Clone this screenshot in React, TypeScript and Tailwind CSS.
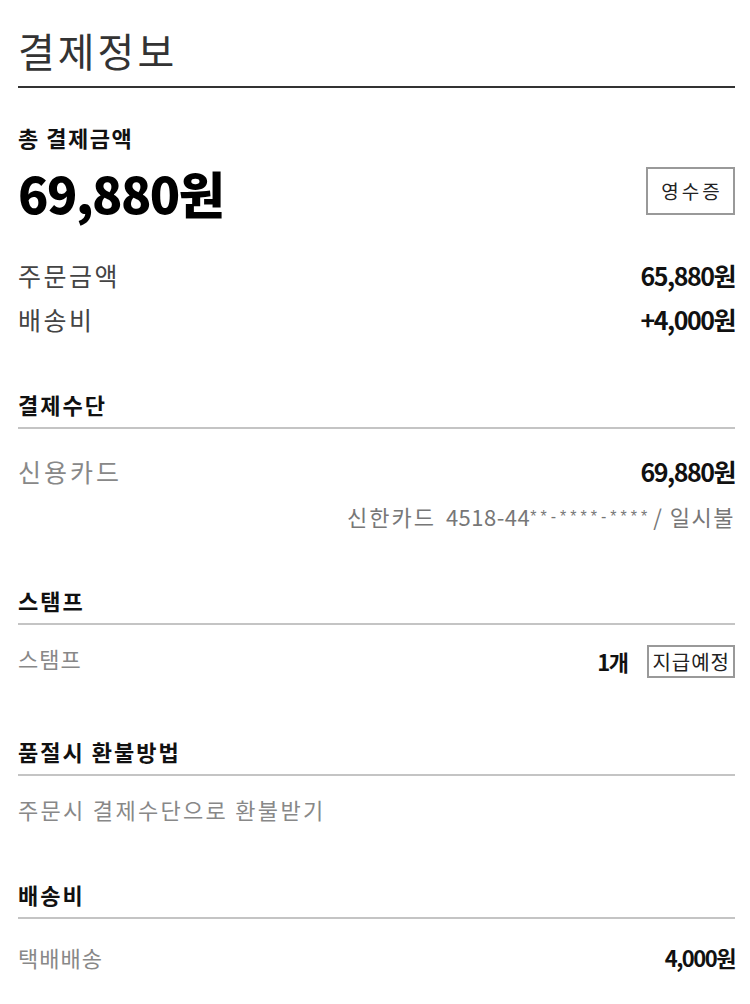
import React from 'react';

const FONT = { fontFamily: '"Noto Sans CJK KR", "Noto Sans", sans-serif' };

const SectionTitle = ({ title, className = '' }: { title: string; className?: string }) => (
    <div className={`border-b-2 border-[#c4c4c4] pb-[9px] ${className}`}>
        <h3 className="text-[22px] font-bold text-[#111] leading-[28px] tracking-[2px]">{title}</h3>
    </div>
);

const Price = ({ children, className = '' }: { children: React.ReactNode; className?: string }) => (
    <span className={`font-bold text-[#111] leading-[30px] tracking-[-1.5px] ${className}`}>{children}</span>
);

export default function App() {
    return (
        <div className="w-[750px] bg-white pl-[18px] pr-[15px] pt-[24px] pb-[20px]" style={FONT}>
            <h2 className="text-[40px] leading-[52px] text-[#333] font-normal border-b-2 border-[#333] pb-[10px] tracking-[3px]">결제정보</h2>

            <p className="mt-[35px] text-[22px] font-bold text-[#111] leading-[28px] tracking-[1.5px]">총 결제금액</p>
            <div className="flex items-start justify-between mt-[15px]">
                <span className="text-[50px] font-extrabold text-black leading-[52px] tracking-[-1.5px]">69,880원</span>
                <button className="w-[89px] h-[48px] mt-[1px] border-2 border-[#999] text-[19px] text-[#222] bg-white tracking-[3px] pl-[3px]">영수증</button>
            </div>

            <div className="mt-[40px] flex flex-col gap-[10px]">
                <div className="flex items-center justify-between h-[34px]">
                    <span className="text-[25px] text-[#444] leading-[34px] tracking-[2.5px]">주문금액</span>
                    <Price className="text-[25px]">65,880원</Price>
                </div>
                <div className="flex items-center justify-between h-[34px]">
                    <span className="text-[25px] text-[#444] leading-[34px] tracking-[2.5px]">배송비</span>
                    <Price className="text-[25px]">+4,000원</Price>
                </div>
            </div>

            <SectionTitle title="결제수단" className="mt-[54px]" />
            <div className="flex items-center justify-between mt-[25px] h-[34px]">
                <span className="text-[25px] text-[#888] leading-[34px] tracking-[3px]">신용카드</span>
                <Price className="text-[25px]">69,880원</Price>
            </div>
            <div className="flex items-center justify-end mt-[13px] h-[30px] text-[#777] leading-[30px]">
                <span className="text-[22px] tracking-[2px]">신한카드</span>
                <span className="text-[22px] tracking-[0.5px] ml-[10px]">4518-44</span>
                <span className="text-[16px] tracking-[4px] leading-none mt-[2px]" style={{ fontFamily: '"Liberation Sans", sans-serif' }}>**-****-****</span>
                <span className="text-[22px] tracking-[1.5px] ml-[2px]">/ 일시불</span>
            </div>

            <SectionTitle title="스탬프" className="mt-[55px]" />
            <div className="flex items-center justify-between mt-[16px] h-[34px]">
                <span className="text-[22px] text-[#888] leading-[34px] tracking-[1px]">스탬프</span>
                <div className="flex items-center gap-[20px] mt-[6px]">
                    <Price className="text-[22px]">1개</Price>
                    <span className="border-2 border-[#999] text-[20px] text-[#222] leading-[29px] px-[3px] tracking-[1px]">지급예정</span>
                </div>
            </div>

            <SectionTitle title="품절시 환불방법" className="mt-[62px]" />
            <p className="text-[22px] text-[#888] leading-[30px] mt-[18px] tracking-[2.3px]">주문시 결제수단으로 환불받기</p>

            <SectionTitle title="배송비" className="mt-[56px]" />
            <div className="flex items-center justify-between mt-[23px] h-[30px]">
                <span className="text-[22px] text-[#888] leading-[30px] tracking-[1px]">택배배송</span>
                <Price className="text-[22px]">4,000원</Price>
            </div>
        </div>
    );
}
